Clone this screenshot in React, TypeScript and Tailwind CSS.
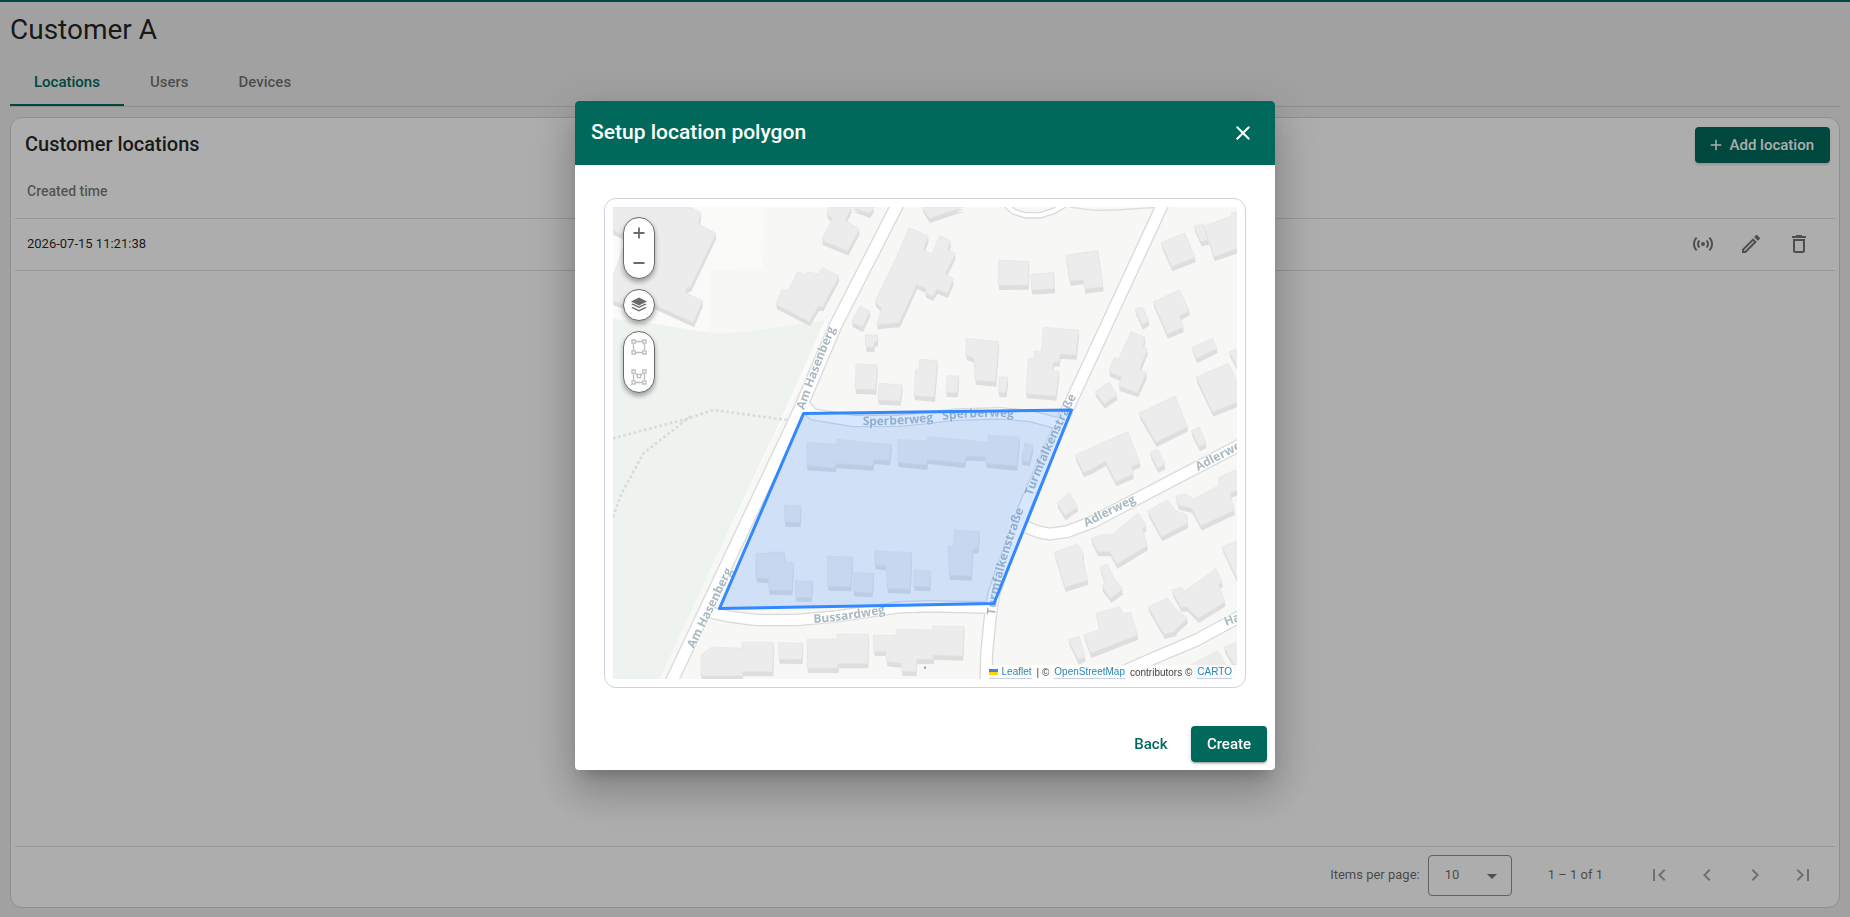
import { useState } from 'react';
import {
  MdAdd,
  MdArrowDropDown,
  MdChevronLeft,
  MdChevronRight,
  MdClose,
  MdDeleteOutline,
  MdFirstPage,
  MdLastPage,
  MdOutlineEdit,
  MdSensors,
} from 'react-icons/md';

interface Tile {
  x: number;
  y: number;
  buildings: string[];
}

interface Label {
  id: string;
  text: string;
  path: string;
}

const tabs = ['Locations', 'Users', 'Devices'];

const locations = [{ id: 1, createdTime: '2026-07-15 11:21:38' }];

// Building footprints, grouped by map tile
const tiles: Tile[] = [
  {
    x: -129,
    y: -351,
    buildings: [
      '129,351 360,351 393,368 385,402 438,430 362,590 348,596 346,608 398,632 370,698 205,622 188,655 129,632 129,560 170,440 129,421',
      '778,351 770,372 788,385 755,450 833,483 868,418 825,390 845,351',
      '845,351 898,370 912,351',
      '683,545 708,555 712,545 745,552 757,533 807,558 758,650 745,648 718,695 618,643 637,598 654,602',
      '870,648 900,663 877,712 845,697',
      '885,735 923,735 921,756 912,756 912,772 888,772',
      '858,822 922,825 917,900 856,897',
      '927,880 997,885 990,933 924,930',
    ],
  },
  {
    x: 891,
    y: -351,
    buildings: [
      '-2,413 55,438 40,480 65,492 90,437 122,453 113,477 136,490 105,553 130,567 112,610 80,597 68,620 45,608 50,597 20,583 -32,698 -100,704 -85,655 -105,635 -45,510',
      '30,808 82,812 73,922 12,916 17,840 28,835',
      '36,351 160,351 58,385',
      '266,511 356,514 355,585 265,586',
      '362,553 431,547 433,596 365,600',
      '467,496 563,481 579,590 525,597 520,569 480,573',
      '168,745 266,755 257,876 196,870 192,805 168,795',
      '112,857 146,858 142,908 108,907',
      '268,860 293,862 288,908 265,907',
      '400,712 506,720 498,795 450,793 447,815 430,817 428,843 447,845 437,918 348,911 355,806 372,805 372,783 395,785',
      '753,458 824,429 856,502 785,530',
      '852,408 880,401 895,450 873,455',
      '883,408 965,378 965,368 985,365 985,475 912,500',
      '730,636 808,599 838,662 808,678 820,712 772,732',
      '675,657 697,650 717,692 697,705',
      '662,725 705,742 698,768 712,778 688,838 710,848 683,908 626,888 635,862 597,845 612,803 627,806',
      '846,772 908,745 921,775 860,805',
      '957,785 985,775 985,835',
      '555,905 598,876 621,915 583,942',
      '858,862 955,820 985,880 985,935 908,966',
    ],
  },
  {
    x: -39,
    y: 579,
    buildings: [
      '622,128 710,133 712,118 822,130 874,133 868,182 822,178 818,198 708,190 705,203 620,197',
      '553,315 603,316 600,367 555,366',
      '468,460 505,460 505,457 554,457 554,485 581,487 575,572 507,570 505,536 468,533',
      '586,543 638,544 633,592 587,591',
      '683,468 758,472 752,560 683,558',
      '760,518 821,520 816,578 760,575',
      '825,453 935,458 930,568 862,565 858,498 825,493',
      '943,510 991,513 989,560 941,558',
      '310,760 336,741 427,745 427,727 521,727 518,815 427,815 426,828 303,828 303,765',
      '535,728 608,730 606,778 537,777',
      '622,717 712,717 712,702 806,703 803,791 714,791 714,805 622,805',
      '820,706 888,706 888,688 998,690 998,678 1092,680 1088,768 1000,765 1000,778 950,778 948,815 905,813 905,790 860,785 858,753 822,755',
    ],
  },
  {
    x: 921,
    y: 579,
    buildings: [
      '-65,118 22,124 24,110 135,120 203,128 205,106 298,112 290,198 198,190 195,170 137,168 134,190 22,178 20,196 -67,187',
      '315,130 339,136 328,185 304,180',
      '103,391 178,395 174,445 158,447 153,528 88,525 84,440 102,438',
      '657,40 765,-12 803,80 708,127',
      '465,165 623,95 660,188 634,200 640,222 587,245 556,183 520,205 490,218',
      '814,93 838,81 858,130 838,140',
      '690,158 712,146 735,193 713,205',
      '411,308 448,278 473,320 435,347',
      '683,333 742,300 768,332 800,345 803,370 725,410',
      '767,288 795,282 820,297 895,258 897,232 945,210 955,212 955,270 930,280 943,330 843,378 815,325 775,315',
      '513,415 550,403 575,405 640,350 655,340 678,375 668,390 682,437 590,492 570,455 533,455',
      '403,457 472,432 490,460 488,475 503,540 435,562',
      '540,503 562,492 580,530 608,568 572,595 546,560 555,545',
      '906,440 955,423 955,545',
      '755,570 785,562 795,572 870,520 885,503 907,545 895,555 915,605 835,655 800,620 783,622',
      '684,620 742,594 765,625 803,655 770,685 765,695 733,703',
      '528,640 598,620 610,640 632,638 653,705 512,760 492,705 540,690',
      '445,718 478,710 495,770 475,780',
      '800,800 893,752 920,800 920,837 750,837',
      '912,742 955,725 955,815',
    ],
  },
];

const roads = [
  { width: 38, d: 'M865,-30 L666,359 L560,609 L165,1446' },
  { width: 34, d: 'M571,590 L600,622 L721,642 L861,641 L921,635 L1021,623 L1161,619 L1251,627 L1345,652' },
  { width: 36, d: 'M1659,-30 L1361,612 L1243,879 L1191,1019 L1143,1159 L1133,1219 L1121,1339 L1119,1440' },
  { width: 36, d: 'M1235,958 L1280,976 L1311,981 L1361,974 L1441,944 L1900,704' },
  { width: 34, d: 'M290,1216 L351,1229 L431,1239 L551,1239 L661,1229 L861,1201 L951,1198 L1131,1202' },
  { width: 36, d: 'M1441,1434 L1621,1354 L1751,1299 L1900,1218' },
  { width: 16, d: 'M1170,-16 L1202,14 L1238,25 L1282,25 L1322,12 L1360,-10' },
];

const labels: Label[] = [
  { id: 'hasenberg-n', text: 'Am Hasenberg', path: 'M191 203 Q205 163 228 108' },
  { id: 'hasenberg-s', text: 'Am Hasenberg', path: 'M81 442 L126 350' },
  { id: 'sperberweg-w', text: 'Sperberweg', path: 'M250 218 Q286 219 330 213' },
  { id: 'sperberweg-e', text: 'Sperberweg', path: 'M330 213 Q365 208 415 211' },
  { id: 'bussardweg', text: 'Bussardweg', path: 'M201 416 Q235 414 290 403' },
  { id: 'turmfalken-n', text: 'Turmfalkenstraße', path: 'M419 289 Q435 245 471 174' },
  { id: 'turmfalken-s', text: 'Turmfalkenstraße', path: 'M382 408 Q385 370 416 288' },
  { id: 'adlerweg-w', text: 'Adlerweg', path: 'M473 320 L545 284' },
  { id: 'adlerweg-e', text: 'Adlerweg', path: 'M585 264 L657 227' },
  { id: 'habichtweg', text: 'Habichtweg', path: 'M613 419 L685 392' },
];

function StreetMap() {
  return (
    <svg
      className="block h-[472px] w-full"
      viewBox="0 0 624 472"
      preserveAspectRatio="xMidYMid slice"
      role="img"
      aria-label="Street map with location polygon"
    >
      <rect width="624" height="472" fill="#f7f7f5" />
      <g transform="scale(0.33333)">
        {/* open ground and park */}
        <path d="M0,0 H456 L449,184 L289,191 V377 L0,345 Z" fill="#fafaf8" />
        <path d="M100,345 L291,377 L391,376 L640,337 L660,330 L120,1446 H0 V345 Z" fill="#fafaf8" />
        <path d="M0,335 L121,350 L291,377 L391,376 L636,339 L516,609 L139,1416 H0 Z" fill="#eef3ef" />
        <g fill="none" stroke="#dadad8" strokeWidth="8" strokeDasharray="8 8">
          <path d="M0,694 L151,654 L226,634 L301,609 L521,639" />
          <path d="M233,628 L91,739 L26,859 L0,930" />
        </g>

        {tiles.map((tile) => (
          <g key={`${tile.x}:${tile.y}`} transform={`translate(${tile.x} ${tile.y})`}>
            {tile.buildings.map((points) => (
              <g key={points} strokeLinejoin="round">
                <polygon points={points} transform="translate(2 14)" fill="#dedede" />
                <polygon points={points} transform="translate(1 7)" fill="#dedede" />
                <polygon points={points} fill="#ececec" stroke="#e4e4e4" strokeWidth="2" />
              </g>
            ))}
          </g>
        ))}

        <path d="M1371,0 L1441,10 L1511,9 L1631,1" fill="none" stroke="#dedede" strokeWidth="4" />
        <g fill="none" stroke="#dadada" strokeLinejoin="round">
          {roads.map((road) => (
            <path key={road.d} d={road.d} strokeWidth={road.width + 4} />
          ))}
        </g>
        <g fill="none" stroke="#ffffff" strokeLinejoin="round">
          {roads.map((road) => (
            <path key={road.d} d={road.d} strokeWidth={road.width - 4} />
          ))}
        </g>
        <rect x="933" y="1379" width="6" height="6" fill="#999999" />
      </g>

      <g
        className="font-['Open_Sans',sans-serif] text-[12px] font-bold"
        fill="#a9b9c0"
        stroke="#ffffff"
        strokeWidth="2"
        strokeOpacity="0.6"
        paintOrder="stroke"
      >
        {labels.map((label) => (
          <g key={label.id}>
            <path id={label.id} d={label.path} fill="none" stroke="none" />
            <text>
              <textPath href={`#${label.id}`}>{label.text}</textPath>
            </text>
          </g>
        ))}
      </g>

      <polygon
        points="190.5,206.5 106.5,401.5 381,396.5 458.5,203"
        fill="#3388ff"
        fillOpacity="0.2"
        stroke="#3388ff"
        strokeWidth="3"
        strokeLinejoin="round"
      />
    </svg>
  );
}

function LayersIcon() {
  return (
    <svg className="size-4" viewBox="0 0 16 16" fill="#6b6b6b">
      <path d="M8 0.5 L16 4.5 L8 8.5 L0 4.5 Z" />
      <path d="M0.3 7.2 L1.8 6.5 L8 9.6 L14.2 6.5 L15.7 7.2 L8 11.1 Z" />
      <path d="M0.3 10.7 L1.8 10 L8 13.1 L14.2 10 L15.7 10.7 L8 14.6 Z" />
    </svg>
  );
}

function RectangleIcon() {
  return (
    <svg className="size-4" viewBox="0 0 16 16" fill="none" stroke="#bdbdbd" strokeWidth="1.3">
      <path d="M4.5 2.5 H11.5 M4.5 13.5 H11.5 M2.5 4.5 V11.5 M13.5 4.5 V11.5" />
      <path d="M1 1 H4.2 V4.2 H1 Z M11.8 1 H15 V4.2 H11.8 Z M1 11.8 H4.2 V15 H1 Z M11.8 11.8 H15 V15 H11.8 Z" />
    </svg>
  );
}

function PolygonIcon() {
  return (
    <svg className="size-4" viewBox="0 0 16 16" fill="none" stroke="#bdbdbd" strokeWidth="1.3">
      <path d="M4.2 4 L6.4 6 M11.8 4 L9.6 6 M4.5 13.5 H11.5 M2.5 4.5 V11.5 M13.5 4.5 V11.5" />
      <path d="M1 1 H4.2 V4.2 H1 Z M11.8 1 H15 V4.2 H11.8 Z M6.4 5.4 H9.6 V8.6 H6.4 Z M1 11.8 H4.2 V15 H1 Z M11.8 11.8 H15 V15 H11.8 Z" />
    </svg>
  );
}

function MapControls() {
  const bar =
    'flex w-8 flex-col overflow-hidden rounded-full border border-[#6b6b6b] bg-white shadow-[0_3px_5px_rgba(0,0,0,0.35)]';
  const button = 'flex h-[30px] w-full items-center justify-center';

  return (
    <div className="absolute top-[10px] left-[10px] flex flex-col gap-[10px]">
      <div className={bar}>
        <button type="button" aria-label="Zoom in" className={button}>
          <svg className="size-3" viewBox="0 0 12 12" stroke="#6b6b6b" strokeWidth="1.8">
            <path d="M6 0.5 V11.5 M0.5 6 H11.5" />
          </svg>
        </button>
        <button type="button" aria-label="Zoom out" className={button}>
          <svg className="size-3" viewBox="0 0 12 12" stroke="#6b6b6b" strokeWidth="1.8">
            <path d="M0.5 6 H11.5" />
          </svg>
        </button>
      </div>
      <div className={bar}>
        <button type="button" aria-label="Layers" className={button}>
          <LayersIcon />
        </button>
      </div>
      <div className={bar}>
        <button type="button" aria-label="Draw rectangle" className={button}>
          <RectangleIcon />
        </button>
        <button type="button" aria-label="Draw polygon" className={button}>
          <PolygonIcon />
        </button>
      </div>
    </div>
  );
}

function MapAttribution() {
  const link = 'border-b border-[#c9cfe6] text-[#2a86b5]';

  return (
    <div className="absolute right-0 bottom-0 flex items-center gap-[5px] bg-white/70 px-[5px] font-['Liberation_Sans',Arial,sans-serif] text-[10px] leading-[13px] text-[#444]">
      <a href="#leaflet" className={`${link} flex items-center gap-1`}>
        <svg className="h-[6px] w-[9px]" viewBox="0 0 9 6">
          <path fill="#4c7be1" d="M0 0h9v3H0z" />
          <path fill="#ffd500" d="M0 3h9v3H0z" />
        </svg>
        Leaflet
      </a>
      <span>| ©</span>
      <a href="#osm" className={link}>OpenStreetMap</a>
      <span>contributors ©</span>
      <a href="#carto" className={link}>CARTO</a>
    </div>
  );
}

function PolygonDialog() {
  return (
    <div className="fixed inset-0 flex items-center justify-center bg-black/32 pb-[46px]">
      <div
        role="dialog"
        aria-labelledby="dialog-title"
        className="w-[700px] max-w-full overflow-hidden rounded-[4px] bg-white shadow-[0_11px_15px_-7px_rgba(0,0,0,0.2),0_24px_38px_3px_rgba(0,0,0,0.14),0_9px_46px_8px_rgba(0,0,0,0.12)]"
      >
        <div className="flex h-16 items-center justify-between bg-[#00695c] pr-2 pl-4 text-white">
          <h2 id="dialog-title" className="text-[21px] font-medium">Setup location polygon</h2>
          <button type="button" aria-label="Close" className="flex size-12 items-center justify-center">
            <MdClose className="size-6" />
          </button>
        </div>
        <div className="px-[29px] pt-[33px] pb-[38px]">
          <div className="rounded-xl border border-[#cfd3de] p-2">
            <div className="relative overflow-hidden">
              <StreetMap />
              <MapControls />
              <MapAttribution />
            </div>
          </div>
        </div>
        <div className="flex justify-end gap-2 px-2 pb-2 text-[15px] font-medium">
          <button type="button" className="h-9 min-w-16 px-3 text-[#00695c]">Back</button>
          <button
            type="button"
            className="h-9 min-w-[76px] rounded-[4px] bg-[#00695c] px-4 text-white shadow-[0_3px_1px_-2px_rgba(0,0,0,0.2),0_2px_2px_rgba(0,0,0,0.14),0_1px_5px_rgba(0,0,0,0.12)]"
          >
            Create
          </button>
        </div>
      </div>
    </div>
  );
}

export default function App() {
  const [activeTab, setActiveTab] = useState('Locations');
  const [pageSize, setPageSize] = useState('10');

  const iconButton = 'flex size-12 items-center justify-center';

  return (
    <div className="flex min-h-screen flex-col border-t-2 border-[#00695c] bg-[#eeeeee] px-[10px] pb-[9px] font-['Roboto',sans-serif] text-black/87">
      <h1 className="flex h-14 items-center text-[28px]">Customer A</h1>

      <div role="tablist" className="flex gap-[2px] border-b border-[#d2d2d2] text-[15px] font-medium">
        {tabs.map((tab) => (
          <button
            key={tab}
            type="button"
            role="tab"
            aria-selected={tab === activeTab}
            onClick={() => setActiveTab(tab)}
            className={`h-12 border-b-2 px-6 pt-[2px] ${
              tab === activeTab ? 'border-[#00695c] text-[#00695c]' : 'border-transparent text-black/54'
            }`}
          >
            {tab}
          </button>
        ))}
      </div>

      <div className="mt-[10px] flex flex-1 flex-col rounded-xl border border-[#d1d2de] bg-white px-1 pt-[9px]">
        <div className="flex h-9 items-center justify-between pr-[5px] pl-[10px]">
          <h2 className="pb-[2px] text-[20px] font-medium">Customer locations</h2>
          <button
            type="button"
            className="flex h-9 items-center gap-1 rounded-[4px] bg-[#00695c] pr-4 pl-3 text-[15px] font-medium text-white shadow-[0_2px_2px_rgba(0,0,0,0.14)]"
          >
            <MdAdd className="size-[18px]" />
            Add location
          </button>
        </div>

        <table className="w-full border-collapse text-left">
          <thead>
            <tr className="h-[55px] border-b border-[#dedede]">
              <th className="px-3 pt-[2px] text-[14px] font-medium text-black/54">Created time</th>
              <th aria-label="Actions" />
            </tr>
          </thead>
          <tbody>
            {locations.map((location) => (
              <tr key={location.id} className="h-[52px] border-b border-[#dedede]">
                <td className="px-3 text-[13px]">{location.createdTime}</td>
                <td className="pr-3">
                  <div className="flex justify-end text-[#757575]">
                    <button type="button" aria-label="Location devices" className={iconButton}>
                      <MdSensors className="size-6" />
                    </button>
                    <button type="button" aria-label="Edit location" className={iconButton}>
                      <MdOutlineEdit className="size-6" />
                    </button>
                    <button type="button" aria-label="Delete location" className={iconButton}>
                      <MdDeleteOutline className="size-6" />
                    </button>
                  </div>
                </td>
              </tr>
            ))}
          </tbody>
        </table>

        <div className="mt-auto flex h-[61px] items-center justify-end border-t border-[#dedede] pr-2 pb-1 text-[13px] text-black/60">
          <label htmlFor="page-size" className="mr-2">Items per page:</label>
          <div className="relative mr-9">
            <select
              id="page-size"
              value={pageSize}
              onChange={(event) => setPageSize(event.target.value)}
              className="h-[41px] w-[84px] appearance-none rounded-[4px] border border-[#8f8f8f] bg-transparent pl-4"
            >
              <option>10</option>
              <option>20</option>
              <option>30</option>
            </select>
            <MdArrowDropDown className="pointer-events-none absolute top-[9px] right-2 size-6 text-[#757575]" />
          </div>
          <span className="mr-8">1 – 1 of 1</span>
          <div className="flex text-[#a6a6a6]">
            <button type="button" aria-label="First page" className={iconButton}>
              <MdFirstPage className="size-6" />
            </button>
            <button type="button" aria-label="Previous page" className={iconButton}>
              <MdChevronLeft className="size-6" />
            </button>
            <button type="button" aria-label="Next page" className={iconButton}>
              <MdChevronRight className="size-6" />
            </button>
            <button type="button" aria-label="Last page" className={iconButton}>
              <MdLastPage className="size-6" />
            </button>
          </div>
        </div>
      </div>

      <PolygonDialog />
    </div>
  );
}
